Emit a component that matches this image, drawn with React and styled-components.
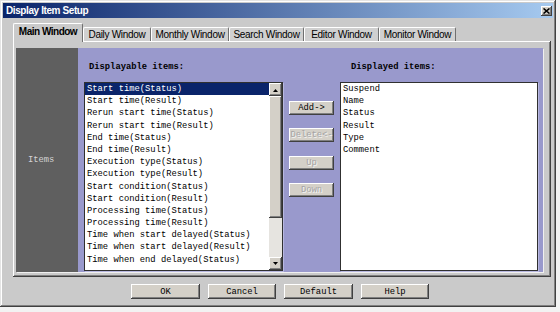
import React from "react";
import styled, { createGlobalStyle, css } from "styled-components";

const Global = createGlobalStyle`
  html, body { margin: 0; padding: 0; background: #f2f2f2; }
  body { font-family: "Liberation Sans", Arial, sans-serif; }
  * { box-sizing: border-box; }
`;

const MONO = `"Liberation Mono", "Courier New", monospace`;

const raised = css`
  box-shadow: inset -1px -1px #404040, inset 1px 1px #ffffff, inset -2px -2px #808080;
`;

const Window = styled.div`
  width: 556px;
  height: 307px;
  background: #cacaca;
  padding: 3px;
  display: flex;
  flex-direction: column;
  box-shadow: inset -1px -1px #404040, inset 1px 1px #e4e4e4, inset -2px -2px #808080, inset 2px 2px #ffffff;
`;

const TitleBar = styled.div`
  height: 15px;
  background: linear-gradient(to right, #0a246a, #a6caf0);
  display: flex;
  align-items: center;
  justify-content: space-between;
  padding: 0 1px 0 3px;
`;

const Title = styled.span`
  color: #fff;
  font-weight: bold;
  font-size: 10px;
  letter-spacing: -0.4px;
  line-height: 15px;
`;

const CloseBtn = styled.div`
  width: 11px;
  height: 10px;
  background: #d4d0c8;
  ${raised};
  display: flex;
  align-items: center;
  justify-content: center;
`;

const TabRow = styled.div`
  display: flex;
  align-items: flex-end;
  height: 18px;
  margin-top: 5px;
  padding-left: 10px;
  position: relative;
  z-index: 1;
`;

const Tab = styled.div`
  width: ${(p) => p.$w}px;
  height: ${(p) => (p.$active ? 19 : 14)}px;
  margin-bottom: ${(p) => (p.$active ? -1 : 0)}px;
  background: ${(p) => (p.$active ? "#cacaca" : "#d0d0d0")};
  border-top: 1px solid #fff;
  border-left: 1px solid #fff;
  border-right: 1px solid #707070;
  border-radius: 2px 2px 0 0;
  font-size: 10px;
  letter-spacing: ${(p) => (p.$active ? -0.5 : -0.3)}px;
  font-weight: ${(p) => (p.$active ? "bold" : "normal")};
  color: #000;
  display: flex;
  align-items: center;
  justify-content: center;
  padding-bottom: ${(p) => (p.$active ? 3 : 0)}px;
  white-space: nowrap;
`;

const Panel = styled.div`
  margin: 0 2px 0 10px;
  height: 236px;
  padding: 7px 8px 5px 3px;
  box-shadow: inset -1px -1px #404040, inset 1px 1px #ffffff, inset -2px -2px #808080;
`;

const Inner = styled.div`
  height: 224px;
  display: flex;
  box-shadow: 1px 1px #f0f0f0;
`;

const SideCol = styled.div`
  width: 62px;
  background: #5f5f5f;
  display: flex;
  align-items: center;
  padding-left: 12px;
  color: #d4d4d4;
  font-family: ${MONO};
  font-size: 8.8px;
`;

const Purple = styled.div`
  flex: 1;
  background: #9999cc;
  padding: 13px 5px 1px 6px;
  display: flex;
  align-items: flex-start;
`;

const Group = styled.div`
  width: ${(p) => p.$w}px;
  display: flex;
  flex-direction: column;
`;

const Label = styled.div`
  font-family: ${MONO};
  font-weight: bold;
  font-size: 8.8px;
  line-height: 12px;
  height: 12px;
  margin-bottom: 9px;
  padding-left: ${(p) => p.$indent}px;
  color: #000;
  white-space: nowrap;
`;

const ListFrame = styled.div`
  height: 189px;
  background: #fff;
  border: 1px solid #303030;
  display: flex;
  box-shadow: 1px 1px #b8b8e0;
`;

const Items = styled.div`
  flex: 1;
  overflow: hidden;
`;

const Item = styled.div`
  height: 12.2px;
  line-height: 12.2px;
  font-family: ${MONO};
  font-size: 8.8px;
  padding-left: 2px;
  white-space: nowrap;
  color: ${(p) => (p.$sel ? "#fff" : "#000")};
  background: ${(p) => (p.$sel ? "#0a246a" : "transparent")};
`;

const ScrollBar = styled.div`
  width: 13px;
  display: flex;
  flex-direction: column;
  background: #e6e4e0;
`;

const ArrowBtn = styled.div`
  height: 13px;
  background: #d4d0c8;
  ${raised};
  display: flex;
  align-items: center;
  justify-content: center;
`;

const Thumb = styled.div`
  height: 122px;
  background: #d4d0c8;
  ${raised};
`;

const Track = styled.div`
  flex: 1;
`;

const BtnCol = styled.div`
  width: 45px;
  margin: 0 6px;
  padding-top: 40px;
  display: flex;
  flex-direction: column;
  gap: 13.3px;
`;

const Button = styled.button`
  width: ${(p) => p.$w || 45}px;
  height: ${(p) => p.$h || 14}px;
  padding: 0;
  border: none;
  background: #d4d0c8;
  ${raised};
  font-family: ${MONO};
  font-size: 8.8px;
  color: ${(p) => (p.disabled ? "#a4a4a4" : "#000")};
  text-shadow: ${(p) => (p.disabled ? "1px 1px #f4f4f4" : "none")};
  white-space: nowrap;
  overflow: hidden;
  display: flex;
  align-items: center;
  justify-content: center;
`;

const Footer = styled.div`
  display: flex;
  justify-content: center;
  gap: 8px;
  padding: 7px 0 0 4px;
`;

const Tri = ({ down }) => (
  <svg width="7" height="4" viewBox="0 0 7 4">
    <polygon points={down ? "1,0 6,0 3.5,3" : "1,4 6,4 3.5,1"} fill="#000" />
  </svg>
);

const left = [
  "Start time(Status)",
  "Start time(Result)",
  "Rerun start time(Status)",
  "Rerun start time(Result)",
  "End time(Status)",
  "End time(Result)",
  "Execution type(Status)",
  "Execution type(Result)",
  "Start condition(Status)",
  "Start condition(Result)",
  "Processing time(Status)",
  "Processing time(Result)",
  "Time when start delayed(Status)",
  "Time when start delayed(Result)",
  "Time when end delayed(Status)",
];

const right = ["Suspend", "Name", "Status", "Result", "Type", "Comment"];

const tabs = [
  ["Main Window", 70],
  ["Daily Window", 68],
  ["Monthly Window", 78],
  ["Search Window", 75],
  ["Editor Window", 75],
  ["Monitor Window", 77],
];

export default function App() {
  return (
    <>
      <Global />
      <Window>
        <TitleBar>
          <Title>Display Item Setup</Title>
          <CloseBtn>
            <svg width="7" height="6" viewBox="0 0 7 6">
              <path d="M0.5 0.5 L6.5 5.5 M6.5 0.5 L0.5 5.5" stroke="#000" strokeWidth="1.6" />
            </svg>
          </CloseBtn>
        </TitleBar>
        <TabRow>
          {tabs.map(([t, w], i) => (
            <Tab key={t} $w={w} $active={i === 0}>
              {t}
            </Tab>
          ))}
        </TabRow>
        <Panel>
          <Inner>
            <SideCol>Items</SideCol>
            <Purple>
              <Group $w={199}>
                <Label $indent={5}>Displayable items:</Label>
                <ListFrame>
                  <Items>
                    {left.map((t, i) => (
                      <Item key={t} $sel={i === 0}>
                        {t}
                      </Item>
                    ))}
                  </Items>
                  <ScrollBar>
                    <ArrowBtn>
                      <Tri />
                    </ArrowBtn>
                    <Thumb />
                    <Track />
                    <ArrowBtn>
                      <Tri down />
                    </ArrowBtn>
                  </ScrollBar>
                </ListFrame>
              </Group>
              <BtnCol>
                <Button>Add-&gt;</Button>
                <Button disabled>Delete&lt;-</Button>
                <Button disabled>Up</Button>
                <Button disabled>Down</Button>
              </BtnCol>
              <Group $w={198}>
                <Label $indent={11}>Displayed items:</Label>
                <ListFrame>
                  <Items>
                    {right.map((t) => (
                      <Item key={t}>{t}</Item>
                    ))}
                  </Items>
                </ListFrame>
              </Group>
            </Purple>
          </Inner>
        </Panel>
        <Footer>
          <Button $w={69} $h={15}>OK</Button>
          <Button $w={68} $h={15}>Cancel</Button>
          <Button $w={69} $h={15}>Default</Button>
          <Button $w={68} $h={15}>Help</Button>
        </Footer>
      </Window>
    </>
  );
}
